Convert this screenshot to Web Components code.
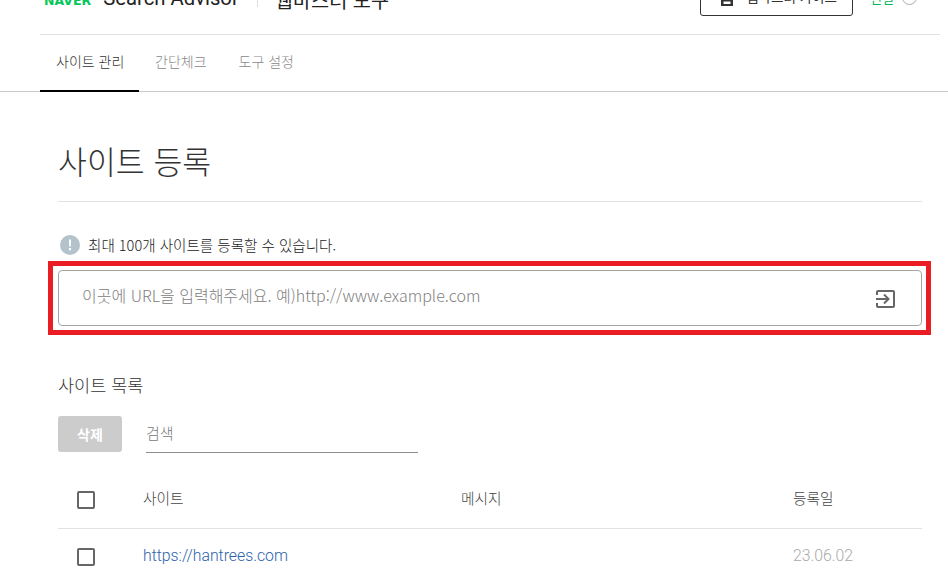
<!doctype html>
<html lang="ko">
<head>
<meta charset="utf-8">
<title>Search Advisor</title>
<style>
  html, body { margin: 0; padding: 0; height: 578px; overflow: hidden; background: #fff; }
  body { font-family: "Noto Sans CJK KR", "Noto Sans", sans-serif; color: #333; }
</style>
</head>
<body>
<sa-header></sa-header>
<sa-tabs></sa-tabs>
<sa-main>
  <sa-register></sa-register>
  <sa-sites></sa-sites>
</sa-main>

<script>
/**
 * Top bar, its upper part is scrolled out of the window
 */
class SaHeader extends HTMLElement {
  constructor() {
    super();
    this.attachShadow({ mode: "open" }).innerHTML = `
      <style>
        :host {
          display: flex;
          align-items: flex-end;
          height: 60px;
          margin: -26px 8px 0 40px;
          border-bottom: 1px solid #e2e2e2;
        }
        #logo {
          margin: 0 0 26px 4px;
          font: 900 12.5px/14px "DejaVu Sans", sans-serif;
          color: #03c75a;
        }
        #name {
          margin: 0 0 21px 12px;
          font: 400 20.3px/30px Roboto, sans-serif;
          color: #222;
        }
        #sep { width: 1px; height: 20px; background: #ddd; margin: 0 17px 27px 18px; }
        #tool { margin-bottom: 19px; font-size: 19.7px; line-height: 30px; color: #222; }
        #guide {
          margin: 0 17px 18px auto;
          box-sizing: border-box;
          width: 153px;
          height: 42px;
          padding-top: 1px;
          border: 1px solid #333;
          border-radius: 3px;
          display: flex;
          align-items: center;
          justify-content: center;
          gap: 12px;
          font-size: 13.5px;
          color: #333;
          background: #fff;
        }
        #guide svg { margin: 8px 0 0 4px; }
        #link { margin-bottom: 26px; font-size: 13px; line-height: 20px; color: #03b760; }
        #circle {
          box-sizing: border-box;
          width: 15px;
          height: 15px;
          margin: 0 23px 29px 8px;
          border: 1.5px solid #aaa;
          border-radius: 50%;
        }
      </style>
      <span id="logo">NAVER</span>
      <span id="name">Search Advisor</span>
      <span id="sep"></span>
      <span id="tool">웹마스터 도구</span>
      <span id="guide">
        <svg width="14" height="14" viewBox="0 0 14 14"><path d="M1 1h12v12H1z" fill="#333"/><path d="M3.5 8.5h7v2.5h-7z" fill="#fff"/></svg>
        웹마스터 가이드
      </span>
      <span id="link">연결</span>
      <span id="circle"></span>
    `;
  }
}

/**
 * Tab row
 */
class SaTabs extends HTMLElement {
  constructor() {
    super();
    this.attachShadow({ mode: "open" }).innerHTML = `
      <style>
        :host {
          display: flex;
          height: 56px;
          padding-left: 40px;
          border-bottom: 1px solid #c8c8c8;
          font-size: 14px;
          font-weight: 300;
          color: #888;
        }
        span {
          box-sizing: border-box;
          height: 57px;
          padding: 0 16px 5px;
          display: flex;
          align-items: center;
        }
        .on { color: #333; border-bottom: 2px solid #000; width: 99px; padding-bottom: 3px; white-space: nowrap; }
      </style>
      <span class="on">사이트 관리</span>
      <span>간단체크</span>
      <span>도구 설정</span>
    `;
  }
}

/**
 * Page body
 */
class SaMain extends HTMLElement {
  constructor() {
    super();
    this.attachShadow({ mode: "open" }).innerHTML = `
      <style>
        :host { display: block; padding: 0 26px 0 58px; }
      </style>
      <slot></slot>
    `;
  }
}

/**
 * Title, notice and URL field with the red mark round it
 */
class SaRegister extends HTMLElement {
  constructor() {
    super();
    this.attachShadow({ mode: "open" }).innerHTML = `
      <style>
        :host { display: block; }
        h1 {
          margin: 0;
          height: 110px;
          box-sizing: border-box;
          padding-top: 46px;
          border-bottom: 1px solid #e2e2e2;
          font-size: 31.4px;
          line-height: 46px;
          font-weight: 300;
          color: #333;
        }
        #notice {
          display: flex;
          align-items: center;
          gap: 8px;
          height: 20px;
          margin: 33px 0 0 2px;
          font-size: 14.55px;
          font-weight: 300;
          color: #222;
        }
        #notice span { padding-bottom: 2px; }
        #mark {
          box-sizing: border-box;
          margin: 6px -9px 0 -10px;
          padding: 4px 4px 4px 5px;
          border: 5px solid #ea1c24;
          height: 74px;
        }
        #field {
          box-sizing: border-box;
          height: 56px;
          padding: 0 26px 0 23px;
          border: 1px solid #a5a5a5;
          border-radius: 4px;
          display: flex;
          align-items: center;
          justify-content: space-between;
          font-size: 16px;
          font-weight: 300;
          color: #808080;
        }
        #field span { padding-bottom: 6px; }
        #field svg { margin-top: 2px; }
      </style>
      <h1>사이트 등록</h1>
      <div id="notice">
        <svg width="20" height="20" viewBox="0 0 20 20"><circle cx="10" cy="10" r="10" fill="#b3c2cb"/><path d="M8.9 4.5h2.2l-.3 7H9.2zM8.9 13h2.2v2.2H8.9z" fill="#fff"/></svg>
        <span>최대 100개 사이트를 등록할 수 있습니다.</span>
      </div>
      <div id="mark">
        <div id="field">
          <span>이곳에 URL을 입력해주세요. 예)http://www.example.com</span>
          <svg width="19" height="18" viewBox="0 0 19 18" fill="none" stroke="#666" stroke-width="2"><path d="M1 5V2a1 1 0 0 1 1-1h15a1 1 0 0 1 1 1v14a1 1 0 0 1-1 1H2a1 1 0 0 1-1-1v-3"/><path d="M0 9h12M8 4.5 12.5 9 8 13.5"/></svg>
        </div>
      </div>
    `;
  }
}

/**
 * Site list: toolbar and table
 */
class SaSites extends HTMLElement {
  constructor() {
    super();
    this.attachShadow({ mode: "open" }).innerHTML = `
      <style>
        :host { display: block; }
        h2 { margin: 38px 0 0; font-size: 17.5px; line-height: 24px; font-weight: 300; color: #333; }
        #bar { display: flex; align-items: flex-start; gap: 24px; margin-top: 19px; }
        #del {
          width: 64px;
          height: 36px;
          border-radius: 3px;
          background: #ccc;
          color: #fff;
          font-size: 14px;
          font-weight: 700;
          display: flex;
          align-items: center;
          justify-content: center;
        }
        #search {
          box-sizing: border-box;
          width: 272px;
          height: 37px;
          padding-bottom: 3px;
          border-bottom: 1px solid #8c8c8c;
          font-size: 15px;
          font-weight: 300;
          color: #777;
          display: flex;
          align-items: center;
        }
        .row {
          display: grid;
          grid-template-columns: 85px 318px 332px 1fr;
          align-items: center;
          font-size: 14.7px;
          font-weight: 300;
          color: #444;
        }
        .head span { padding-bottom: 6px; }
        .body a, .body span { padding-bottom: 2px; }
        .head { height: 56px; margin-top: 19px; border-bottom: 1px solid #e2e2e2; }
        .body { height: 55px; }
        i {
          display: block;
          box-sizing: border-box;
          width: 18px;
          height: 18px;
          margin-left: 19px;
          border: 2px solid #666;
          border-radius: 2px;
        }
        a { color: #2b62ab; text-decoration: none; font-family: Roboto, sans-serif; font-size: 15.8px; }
        .date { color: #aaa; font-family: Roboto, sans-serif; font-size: 15.8px; }
      </style>
      <h2>사이트 목록</h2>
      <div id="bar">
        <div id="del">삭제</div>
        <div id="search">검색</div>
      </div>
      <div class="row head"><i></i><span>사이트</span><span>메시지</span><span>등록일</span></div>
      <div class="row body"><i></i><a>https://hantrees.com</a><span></span><span class="date">23.06.02</span></div>
    `;
  }
}

customElements.define("sa-header", SaHeader);
customElements.define("sa-tabs", SaTabs);
customElements.define("sa-main", SaMain);
customElements.define("sa-register", SaRegister);
customElements.define("sa-sites", SaSites);
</script>
</body>
</html>
